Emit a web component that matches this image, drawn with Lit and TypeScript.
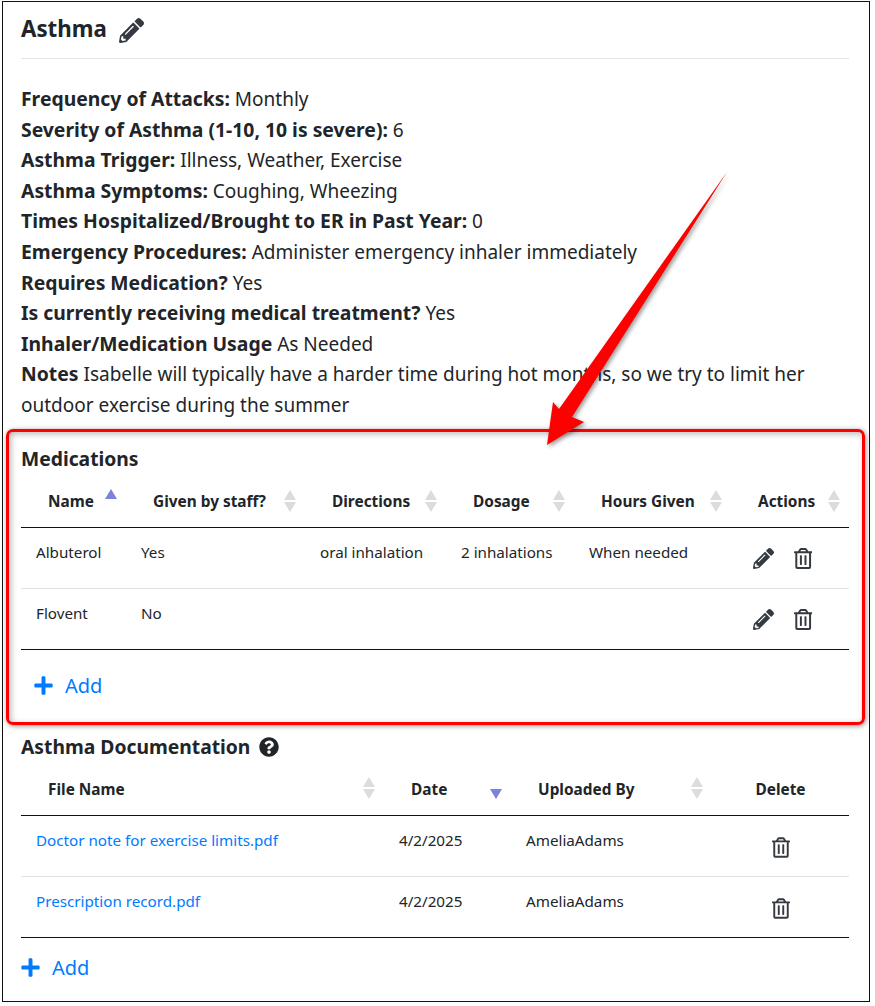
import { LitElement, html, css, svg } from "lit";
import { customElement } from "lit/decorators.js";

const PENCIL = "M497.9 142.1l-46.1 46.1c-4.7 4.7-12.3 4.7-17 0l-111-111c-4.7-4.7-4.7-12.3 0-17l46.1-46.1c18.7-18.7 49.1-18.7 67.9 0l60.1 60.1c18.8 18.7 18.8 49.1 0 67.9zM284.2 99.8L21.6 362.4.4 483.9c-2.9 16.4 11.4 30.6 27.8 27.8l121.5-21.3 262.6-262.6c4.7-4.7 4.7-12.3 0-17l-111-111c-4.8-4.7-12.4-4.7-17.1 0zM124.1 339.9c-5.5-5.5-5.5-14.3 0-19.8l154-154c5.5-5.5 14.3-5.5 19.8 0s5.5 14.3 0 19.8l-154 154c-5.5 5.5-14.3 5.5-19.8 0zM88 424h48v36.3l-64.5 11.3-31.1-31.1L51.7 376H88v48z";
const TRASH = "M268 416h24a12 12 0 0 0 12-12V188a12 12 0 0 0-12-12h-24a12 12 0 0 0-12 12v216a12 12 0 0 0 12 12zM432 80h-82.41l-34-56.7A48 48 0 0 0 274.41 0H173.59a48 48 0 0 0-41.16 23.3L98.41 80H16A16 16 0 0 0 0 96v16a16 16 0 0 0 16 16h16v336a48 48 0 0 0 48 48h288a48 48 0 0 0 48-48V128h16a16 16 0 0 0 16-16V96a16 16 0 0 0-16-16zM171.84 50.91A6 6 0 0 1 177 48h94a6 6 0 0 1 5.15 2.91L293.61 80H154.39zM368 464H80V128h288zm-212-48h24a12 12 0 0 0 12-12V188a12 12 0 0 0-12-12h-24a12 12 0 0 0-12 12v216a12 12 0 0 0 12 12z";
const QUESTION = "M504 256c0 136.997-111.043 248-248 248S8 392.997 8 256C8 119.083 119.043 8 256 8s248 111.083 248 248zM262.655 90c-54.497 0-89.255 22.957-116.549 63.758-3.536 5.286-2.353 12.415 2.715 16.258l34.699 26.31c5.205 3.947 12.621 3.008 16.665-2.122 17.864-22.658 30.113-35.797 57.303-35.797 20.429 0 45.698 13.148 45.698 32.958 0 14.976-12.363 22.667-32.534 33.976C247.128 238.528 216 254.941 216 296v4c0 6.627 5.373 12 12 12h56c6.627 0 12-5.373 12-12v-1.333c0-28.462 83.186-29.647 83.186-106.667 0-58.002-60.165-102-116.531-102zM256 338c-25.365 0-46 20.635-46 46 0 25.364 20.635 46 46 46s46-20.636 46-46c0-25.365-20.635-46-46-46z";
const PLUS = "M416 208H272V64c0-17.67-14.33-32-32-32h-32c-17.67 0-32 14.33-32 32v144H32c-17.67 0-32 14.33-32 32v32c0 17.67 14.33 32 32 32h144v144c0 17.67 14.33 32 32 32h32c17.67 0 32-14.33 32-32V304h144c17.67 0 32-14.33 32-32v-32c0-17.67-14.33-32-32-32z";

const icon = (d: string, vb: string, cls: string) =>
  html`<svg class=${cls} viewBox=${vb} aria-hidden="true"><path d=${d}></path></svg>`;

type Sort = "none" | "asc" | "desc";
const sortIcon = (s: Sort) => html`<svg class="sort ${s}" viewBox="0 0 14 24" aria-hidden="true">
  ${s !== "desc" ? svg`<polygon class=${s === "asc" ? "on" : "off"} points="7,1 13,11 1,11"></polygon>` : ""}
  ${s !== "asc" ? svg`<polygon class=${s === "desc" ? "on" : "off"} points="1,13 13,13 7,23"></polygon>` : ""}
</svg>`;

const facts: [string, string][] = [
  ["Frequency of Attacks:", "Monthly"],
  ["Severity of Asthma (1-10, 10 is severe):", "6"],
  ["Asthma Trigger:", "Illness, Weather, Exercise"],
  ["Asthma Symptoms:", "Coughing, Wheezing"],
  ["Times Hospitalized/Brought to ER in Past Year:", "0"],
  ["Emergency Procedures:", "Administer emergency inhaler immediately"],
  ["Requires Medication?", "Yes"],
  ["Is currently receiving medical treatment?", "Yes"],
  ["Inhaler/Medication Usage", "As Needed"],
  ["Notes", "Isabelle will typically have a harder time during hot months, so we try to limit her outdoor exercise during the summer"],
];

const medHead: [string, Sort, number][] = [
  ["Name", "asc", 105],
  ["Given by staff?", "none", 179],
  ["Directions", "none", 141],
  ["Dosage", "none", 128],
  ["Hours Given", "none", 157],
  ["Actions", "none", 118],
];
const meds = [
  ["Albuterol", "Yes", "oral inhalation", "2 inhalations", "When needed"],
  ["Flovent", "No", "", "", ""],
];
const docs = [
  ["Doctor note for exercise limits.pdf", "4/2/2025", "AmeliaAdams"],
  ["Prescription record.pdf", "4/2/2025", "AmeliaAdams"],
];

@customElement("app-root")
export class AppRoot extends LitElement {
  static styles = css`
    :host { display: block; width: 875px; height: 1006px; background: #fff; font-family: "Noto Sans", sans-serif; color: #212529; }
    * { box-sizing: border-box; }
    .frame { position: relative; margin: 1px 0 0 2px; width: 868px; height: 1001px; border: 1px solid #111; padding: 0 20px 0 18px; }
    .title { display: flex; align-items: center; gap: 12px; height: 57px; margin: 0; border-bottom: 1px solid #e4e4e4; padding-bottom: 3px; font-size: 22.3px; font-weight: 700; }
    .title svg { width: 25px; height: 25px; fill: #343a40; margin-top: 3px; }
    .facts { margin: 25px 0 0; font-size: 19px; line-height: 30.6px; }
    .facts div { margin: 0; }
    .facts b { font-weight: 700; font-size: 19.35px; }
    .med { position: relative; margin-top: 10px; height: 293px; }
    .red { position: absolute; left: -15px; right: -16px; top: -2px; bottom: -1px; border: 3px solid #f00; border-radius: 7px; box-shadow: 1px 1px 5px rgba(0,0,0,.45), inset 2px 2px 6px rgba(0,0,0,.28); pointer-events: none; }
    h3 { display: flex; align-items: center; gap: 9px; margin: 0; font-size: 19.3px; font-weight: 700; line-height: 30px; height: 30px; }
    h3 svg { width: 20px; height: 20px; fill: #212529; }
    .med h3 { padding-top: 12px; height: 44px; }
    table { border-collapse: collapse; table-layout: fixed; width: 828px; font-size: 15.2px; }
    th { position: relative; height: 53px; text-align: left; padding: 2px 0 0 27px; font-weight: 700; font-size: 15.4px; border-bottom: 1px solid #111; }
    th.center { text-align: center; padding: 2px 0 0; }
    td { height: 61px; vertical-align: top; padding: 13px 15px 0; line-height: 22px; border-bottom: 1px solid #dee2e6; }
    tbody tr:last-child td { border-bottom: 1px solid #111; }
    td a { color: #007bff; text-decoration: none; }
    .sort { position: absolute; right: 8px; top: 14px; width: 14px; height: 24px; }
    .sort.asc { top: 13px; }
    .sort .off { fill: #dcdcdc; }
    .sort .on { fill: #7d82dc; }
    .acts { display: flex; gap: 20px; padding: 7px 0 0 7px; }
    .acts svg { height: 21px; width: auto; fill: #343a40; display: block; }
    .pen { width: 21px; }
    .del { display: flex; justify-content: center; padding-top: 8px; }
    .del svg { height: 21px; width: 18px; fill: #343a40; display: block; }
    .add { display: flex; align-items: center; gap: 12px; color: #007bff; font-size: 20px; height: 71px; }
    .add svg { width: 19px; height: 21px; fill: #007bff; }
    .med .add { padding-left: 13px; }
    .doc { margin-top: 8px; }
    .doc .sort { top: 13px; }
    .doc h3 { height: 31px; }
    .doc .add { height: 58px; }
    .arrow { position: absolute; left: 0; top: 0; width: 868px; height: 1001px; pointer-events: none; filter: drop-shadow(2px 2px 2px rgba(0,0,0,.4)); }
  `;

  private table(head: [string, Sort, number][], body: unknown[][]) {
    return html`<table>
      <colgroup>${head.map((h) => html`<col style="width:${h[2]}px" />`)}</colgroup>
      <thead><tr>${head.map((h) => html`<th class=${h[0] === "Delete" ? "center" : ""}>${h[0]}${h[0] === "Delete" ? "" : sortIcon(h[1])}</th>`)}</tr></thead>
      <tbody>${body.map((r) => html`<tr>${r.map((c) => html`<td>${c}</td>`)}</tr>`)}</tbody>
    </table>`;
  }

  render() {
    const acts = html`<div class="acts">${icon(PENCIL, "0 0 512 512", "pen")}${icon(TRASH, "0 0 448 512", "")}</div>`;
    const del = html`<div class="del">${icon(TRASH, "0 0 448 512", "")}</div>`;
    const docHead: [string, Sort, number][] = [
      ["File Name", "none", 363],
      ["Date", "desc", 127],
      ["Uploaded By", "none", 201],
      ["Delete", "none", 137],
    ];
    return html`<div class="frame">
      <h2 class="title">Asthma ${icon(PENCIL, "0 0 512 512", "")}</h2>
      <div class="facts">${facts.map(([k, v]) => html`<div><b>${k}</b> ${v}</div>`)}</div>
      <section class="med">
        <h3>Medications</h3>
        ${this.table(medHead, meds.map((m) => [...m, acts]))}
        <div class="add">${icon(PLUS, "0 0 448 512", "")}<span>Add</span></div>
        <div class="red"></div>
      </section>
      <section class="doc">
        <h3>Asthma Documentation ${icon(QUESTION, "0 0 512 512", "")}</h3>
        ${this.table(docHead, docs.map((d) => [html`<a>${d[0]}</a>`, d[1], d[2], del]))}
        <div class="add">${icon(PLUS, "0 0 448 512", "")}<span>Add</span></div>
      </section>
      <svg class="arrow" viewBox="0 0 868 1001" aria-hidden="true">
        <polygon fill="#f00" points="724,170 569,415 581,420 544,443 550,400 556,407"></polygon>
      </svg>
    </div>`;
  }
}
